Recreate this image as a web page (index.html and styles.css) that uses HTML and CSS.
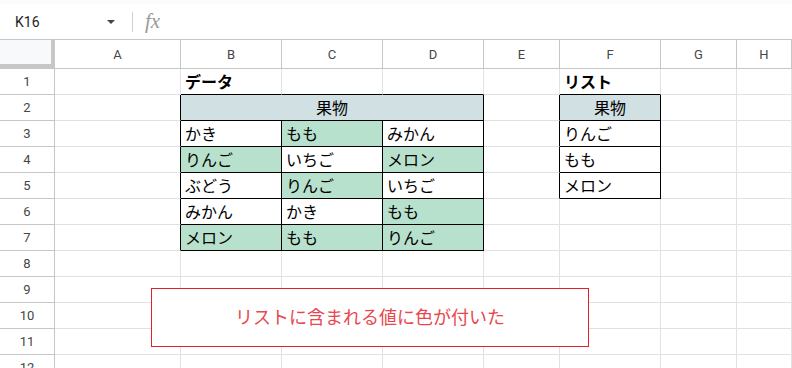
FILE: index.html
```html
<!DOCTYPE html>
<html lang="ja">
<head>
	<meta charset="UTF-8">
	<meta name="viewport" content="width=device-width, initial-scale=1.0">
	<title>条件付き書式</title>
	<link rel="stylesheet" href="styles.css">
</head>
<body>
	<div class="app">
	<header class="toolbar">
		<div class="name-box">K16</div>
		<span class="drop"></span>
		<span class="divider"></span>
		<span class="fx">fx</span>
	</header>
	<main class="sheet">
		<div class="row head">
			<div class="corner"></div>
			<div class="ch">A</div><div class="ch">B</div><div class="ch">C</div><div class="ch">D</div>
			<div class="ch">E</div><div class="ch">F</div><div class="ch">G</div><div class="ch">H</div>
		</div>
		<div class="row">
			<div class="rh">1</div>
			<div class="c"></div>
			<div class="c eb title">データ</div><div class="c eb"></div><div class="c eb"></div>
			<div class="c"></div>
			<div class="c eb title">リスト</div>
			<div class="c"></div><div class="c"></div>
		</div>
		<div class="row">
			<div class="rh">2</div>
			<div class="c er"></div>
			<div class="c t hd span3">果物</div>
			<div class="c er"></div>
			<div class="c t hd">果物</div>
			<div class="c"></div><div class="c"></div>
		</div>
		<div class="row">
			<div class="rh">3</div>
			<div class="c er"></div>
			<div class="c t">かき</div><div class="c t hit">もも</div><div class="c t">みかん</div>
			<div class="c er"></div>
			<div class="c t">りんご</div>
			<div class="c"></div><div class="c"></div>
		</div>
		<div class="row">
			<div class="rh">4</div>
			<div class="c er"></div>
			<div class="c t hit">りんご</div><div class="c t">いちご</div><div class="c t hit">メロン</div>
			<div class="c er"></div>
			<div class="c t">もも</div>
			<div class="c"></div><div class="c"></div>
		</div>
		<div class="row">
			<div class="rh">5</div>
			<div class="c er"></div>
			<div class="c t">ぶどう</div><div class="c t hit">りんご</div><div class="c t">いちご</div>
			<div class="c er"></div>
			<div class="c t">メロン</div>
			<div class="c"></div><div class="c"></div>
		</div>
		<div class="row">
			<div class="rh">6</div>
			<div class="c er"></div>
			<div class="c t">みかん</div><div class="c t">かき</div><div class="c t hit">もも</div>
			<div class="c"></div><div class="c"></div><div class="c"></div><div class="c"></div>
		</div>
		<div class="row">
			<div class="rh">7</div>
			<div class="c er"></div>
			<div class="c t hit">メロン</div><div class="c t hit">もも</div><div class="c t hit">りんご</div>
			<div class="c"></div><div class="c"></div><div class="c"></div><div class="c"></div>
		</div>
		<div class="row">
			<div class="rh">8</div>
			<div class="c"></div><div class="c"></div><div class="c"></div><div class="c"></div>
			<div class="c"></div><div class="c"></div><div class="c"></div><div class="c"></div>
		</div>
		<div class="row">
			<div class="rh">9</div>
			<div class="c"></div><div class="c"></div><div class="c"></div><div class="c"></div>
			<div class="c"></div><div class="c"></div><div class="c"></div><div class="c"></div>
		</div>
		<div class="row">
			<div class="rh">10</div>
			<div class="c"></div><div class="c"></div><div class="c"></div><div class="c"></div>
			<div class="c"></div><div class="c"></div><div class="c"></div><div class="c"></div>
		</div>
		<div class="row">
			<div class="rh">11</div>
			<div class="c"></div><div class="c"></div><div class="c"></div><div class="c"></div>
			<div class="c"></div><div class="c"></div><div class="c"></div><div class="c"></div>
		</div>
		<div class="row">
			<div class="rh">12</div>
			<div class="c"></div><div class="c"></div><div class="c"></div><div class="c"></div>
			<div class="c"></div><div class="c"></div><div class="c"></div><div class="c"></div>
		</div>

		<!-- 吹き出し -->
		<div class="note">リストに含まれる値に色が付いた</div>
	</main>
	</div>
</body>
</html>
```

FILE: styles.css
```css
* {
	box-sizing: border-box;
	margin: 0;
	padding: 0;
}
body {
	width: 792px;
	height: 368px;
	overflow: hidden;
	background: #fff;
	font-family: Roboto, "Noto Sans CJK JP", sans-serif;
}

.toolbar {
	display: flex;
	align-items: center;
	height: 40px;
	border-top: 4px solid #f9fbfd;
	border-bottom: 1px solid #c7c7c7;
	padding-left: 15px;
}
.name-box {
	width: 90px;
	font-size: 14px;
	color: #1f1f1f;
}
.drop {
	width: 0;
	height: 0;
	border-left: 4px solid transparent;
	border-right: 4px solid transparent;
	border-top: 4px solid #444;
	margin-left: 2px;
}
.divider {
	width: 1px;
	height: 20px;
	background: #d0d0d0;
	margin-left: 17px;
}
.fx {
	margin-left: 12px;
	font-family: "Liberation Serif", serif;
	font-style: italic;
	font-size: 21px;
	line-height: 1;
	color: #9a9a9a;
}

.sheet {
	position: relative;
}
.row {
	display: grid;
	grid-template-columns: 55px 126px 101px 101px 101px 76px 101px 76px 1fr;
	height: 26px;
}
.row.head {
	height: 29px;
}
.corner {
	background: #f8f9fa;
	border-right: 4px solid #c7c7c7;
	border-bottom: 5px solid #c7c7c7;
}
.ch {
	display: flex;
	align-items: center;
	justify-content: center;
	font-size: 13px;
	color: #444746;
	border-right: 1px solid #c4c7c5;
	border-bottom: 1px solid #c4c7c5;
}
.rh {
	display: flex;
	align-items: center;
	justify-content: center;
	font-size: 13px;
	color: #444746;
	border-right: 1px solid #c4c7c5;
	border-bottom: 1px solid #c4c7c5;
}

.c {
	border-right: 1px solid #e1e1e1;
	border-bottom: 1px solid #e1e1e1;
	padding-left: 4px;
	font-family: "Noto Sans CJK JP", sans-serif;
	font-size: 16px;
	line-height: 25px;
	color: #000;
	white-space: nowrap;
}
.c.eb {
	border-bottom-color: #000;
}
.c.er {
	border-right-color: #000;
}
.c.t {
	border-right-color: #000;
	border-bottom-color: #000;
}
.title {
	font-weight: bold;
}
.hd {
	background: #d0e0e3;
	text-align: center;
	padding-left: 0;
}
.span3 {
	grid-column: span 3;
}
.hit {
	background: #b7e1cd;
}

.note {
	position: absolute;
	left: 151px;
	top: 248px;
	width: 438px;
	height: 59px;
	display: flex;
	align-items: center;
	justify-content: center;
	padding-bottom: 4px;
	background: #fff;
	border: 1px solid #e3202c;
	font-family: "Noto Sans CJK JP", sans-serif;
	font-size: 18px;
	color: #e8474f;
}
```
